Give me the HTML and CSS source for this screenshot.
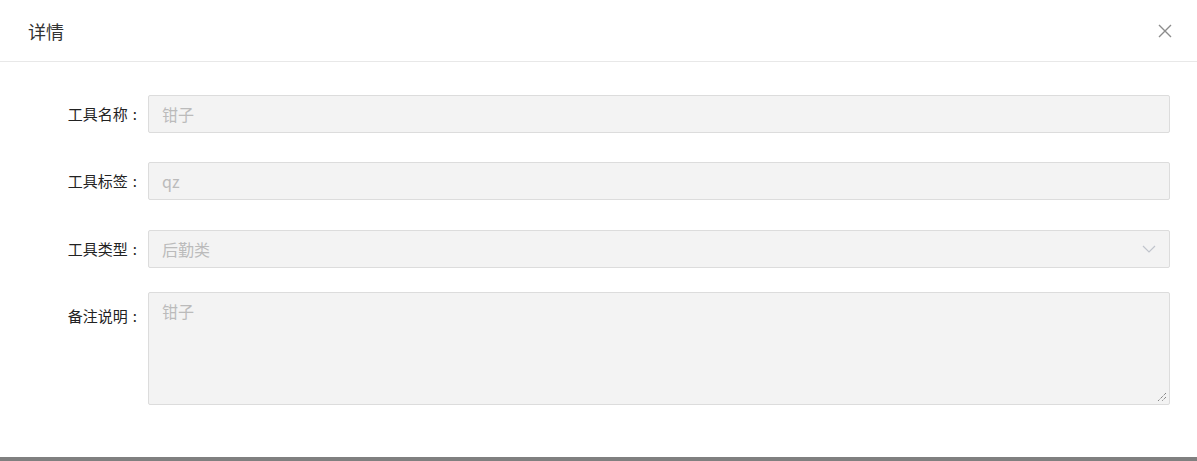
FILE: index.html
```html
<!DOCTYPE html>
<html lang="zh-CN">
  <head>
    <meta charset="UTF-8">
    <title>详情</title>
    <link rel="stylesheet" href="styles.css">
  </head>
  <body>
    <div class="dialog">
      <!-- Header -->
      <div class="dialog-header">
        <span class="dialog-title">详情</span>
        <svg class="close" width="14" height="14" viewBox="0 0 14 14">
          <path d="M1 1L13 13M13 1L1 13" stroke="#8c8c8c" stroke-width="1.4" fill="none"/>
        </svg>
      </div>
      <!-- Form -->
      <div class="dialog-body">
        <div class="form-row row-name">
          <label class="form-label">工具名称<span class="colon">:</span></label>
          <div class="field">钳子</div>
        </div>
        <div class="form-row row-tag">
          <label class="form-label">工具标签<span class="colon">:</span></label>
          <div class="field">qz</div>
        </div>
        <div class="form-row row-type">
          <label class="form-label">工具类型<span class="colon">:</span></label>
          <div class="field select">
            <span>后勤类</span>
            <svg class="arrow" width="14" height="9" viewBox="0 0 14 9">
              <path d="M1 1L7 7L13 1" stroke="#c0c4cc" stroke-width="1.2" fill="none"/>
            </svg>
          </div>
        </div>
        <div class="form-row row-note">
          <label class="form-label">备注说明<span class="colon">:</span></label>
          <div class="field textarea">
            钳子
            <svg class="grip" width="10" height="10" viewBox="0 0 10 10">
              <path d="M9 1L1 9M9 5L5 9" stroke="#555" stroke-width="1" stroke-dasharray="1 1" fill="none"/>
            </svg>
          </div>
        </div>
      </div>
    </div>
    <div class="page-bottom"></div>
  </body>
</html>
```

FILE: styles.css
```css
body {
  margin: 0;
  padding: 0;
  font-family: "Microsoft YaHei", "Noto Sans CJK SC", "Liberation Sans", sans-serif;
  color: #303133;
  background: #fff;
  height: 461px;
  display: flex;
  flex-direction: column;
  overflow: hidden;
}

.dialog {
  flex: 1;
}

/* Header */
.dialog-header {
  height: 61px;
  padding: 0 25px 0 28px;
  border-bottom: 1px solid #e8e8e8;
  display: flex;
  align-items: center;
  justify-content: space-between;
}

.dialog-title {
  font-size: 18px;
  color: #333;
  line-height: 24px;
}

.close {
  display: block;
  margin-top: 1px;
}

/* Form */
.dialog-body {
  padding: 33px 27px 0 0;
}

.form-row {
  display: flex;
  align-items: flex-start;
}

.row-tag {
  margin-top: 29px;
}

.row-type {
  margin-top: 30px;
}

.row-note {
  margin-top: 24px;
}

.form-label {
  width: 148px;
  flex-shrink: 0;
  text-align: right;
  padding-right: 11px;
  font-size: 15px;
  line-height: 38px;
  color: #222;
  box-sizing: border-box;
}

.colon {
  margin-left: 5px;
}

.field {
  flex: 1;
  height: 38px;
  box-sizing: border-box;
  background: #f3f3f3;
  border: 1px solid #dcdcdc;
  border-radius: 2px;
  padding: 0 13px;
  font-size: 16px;
  line-height: 36px;
  color: #bbbbbb;
}

.select {
  display: flex;
  align-items: center;
  justify-content: space-between;
}

.arrow {
  display: block;
}

.textarea {
  position: relative;
  height: 113px;
  line-height: 22px;
  padding-top: 7px;
}

.grip {
  position: absolute;
  right: 2px;
  bottom: 2px;
}

.row-note .form-label {
  line-height: 48px;
}

.page-bottom {
  height: 4px;
  background: #808080;
}
```
